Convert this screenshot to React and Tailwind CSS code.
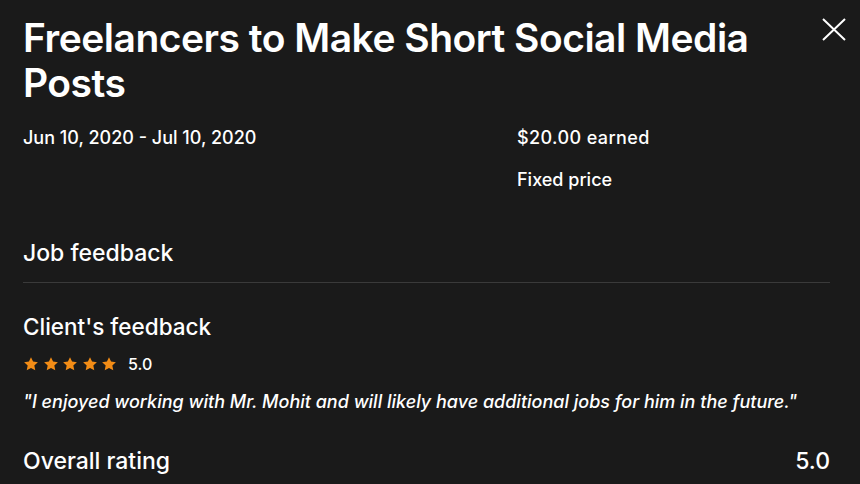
function Star() {
  return (
    <svg viewBox="0 0 24 24" className="h-[16px] w-[16px]" fill="#f28c16">
      <path d="M12 1.8l3.1 6.6 7.2.9-5.3 5 1.4 7.1L12 17.9l-6.4 3.5 1.4-7.1-5.3-5 7.2-.9z" />
    </svg>
  );
}

function CloseIcon() {
  return (
    <svg viewBox="0 0 24 24" className="h-[24px] w-[24px]" stroke="currentColor" strokeWidth="2" fill="none">
      <path d="M1 1l22 21M23 1L1 22" />
    </svg>
  );
}

export default function App() {
  return (
    <div
      className="min-h-[484px] w-full bg-[#1a1a1a] px-[23px] pt-[15px] text-white"
      style={{ fontFamily: "Inter, 'Liberation Sans', Arial, sans-serif" }}
    >
      <div className="flex items-start justify-between">
        <h1 className="w-[760px] text-[39px] font-semibold leading-[45px] tracking-[-0.5px]">
          Freelancers to Make Short Social Media Posts
        </h1>
        <button type="button" className="mr-[-9px] mt-[3px] text-white">
          <CloseIcon />
        </button>
      </div>

      <div className="mt-[21px] grid grid-cols-[494px_1fr] text-[18px] font-medium leading-[24px]">
        <div>Jun 10, 2020 - Jul 10, 2020</div>
        <div className="space-y-[18px]">
          <div className="tracking-[0.4px]">$20.00 earned</div>
          <div>Fixed price</div>
        </div>
      </div>

      <h2 className="mt-[46px] text-[23px] font-medium leading-[30px]">Job feedback</h2>
      <div className="mt-[14px] h-px w-[807px] bg-[#3a3a3a]" />

      <h3 className="mt-[30px] text-[22.5px] font-medium leading-[28px]">Client's feedback</h3>
      <div className="mt-[13px] flex h-[20px] items-center gap-[11px]">
        <div className="flex gap-[3.5px]">
          <Star />
          <Star />
          <Star />
          <Star />
          <Star />
        </div>
        <span className="text-[16px] font-medium leading-[20px]">5.0</span>
      </div>
      <p className="mt-[16px] text-[18px] font-medium italic leading-[24px]">
        "I enjoyed working with Mr. Mohit and will likely have additional jobs for him in the future."
      </p>

      <div className="mt-[32px] flex w-[807px] items-center justify-between text-[23px] font-medium leading-[30px]">
        <span>Overall rating</span>
        <span>5.0</span>
      </div>
    </div>
  );
}
